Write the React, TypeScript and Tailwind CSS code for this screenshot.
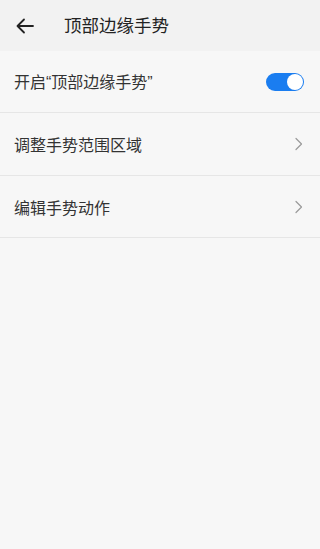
import React from "react";

const font = { fontFamily: '"Noto Sans CJK SC", "Noto Sans", sans-serif' };

function Chevron() {
  return (
    <svg width="8" height="14" viewBox="0 0 8 14" fill="none">
      <path d="M1 1.5L6.5 7L1 12.5" stroke="#9a9a9a" strokeWidth="1.2" strokeLinecap="round" strokeLinejoin="round" />
    </svg>
  );
}

function Row({ label, right, h }: { label: React.ReactNode; right: React.ReactNode; h: string }) {
  return (
    <div className={`flex ${h} items-center justify-between border-b border-[#e6e6e6] pl-[14px] pr-[17px]`}>
      <span className="text-[16px] text-[#333333]">{label}</span>
      {right}
    </div>
  );
}

const q = { fontFamily: '"Liberation Sans", Arial, sans-serif' };

export default function App() {
  return (
    <div className="min-h-[549px] w-[320px] bg-[#f7f7f7]" style={font}>
      <div className="flex h-[51px] items-center bg-[#f2f2f2]">
        <div className="flex w-[64px] items-center pl-[16px]">
          <svg width="18" height="16" viewBox="0 0 18 16" fill="none">
            <path d="M17 8H1.5M8 1.5L1.5 8L8 14.5" stroke="#222" strokeWidth="1.8" strokeLinecap="round" strokeLinejoin="round" />
          </svg>
        </div>
        <span className="text-[17.5px] text-[#222222]">顶部边缘手势</span>
      </div>
      <Row
        h="h-[62px]"
        label={
          <>
            开启<span style={q}>“</span>顶部边缘手势<span style={q}>”</span>
          </>
        }
        right={
          <div className="mr-[-1px] flex h-[18px] w-[38px] items-center justify-end rounded-full bg-[#1a7df0] pr-[1px]">
            <div className="h-[16px] w-[16px] rounded-full bg-white" />
          </div>
        }
      />
      <Row h="h-[63px]" label="调整手势范围区域" right={<Chevron />} />
      <Row h="h-[62px]" label="编辑手势动作" right={<Chevron />} />
    </div>
  );
}
